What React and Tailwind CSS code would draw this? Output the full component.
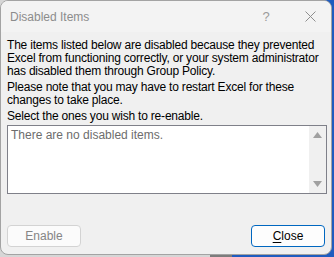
import React from 'react';

// Excel "Disabled Items" dialog, inactive window state
export default function App() {
    return (
        <div className="w-[334px] h-[257px] overflow-hidden bg-[linear-gradient(to_right,#d6d6d6_63%,#7c7c7c_63%,#7c7c7c_69.5%,#1f5cbf_69.5%)] font-['Liberation_Sans',sans-serif]">
            <div className="w-[332px] h-[255px] rounded-[8px] border border-[#a3a3a3] bg-[#f0f0f0] flex flex-col overflow-hidden">
                {/* Title bar */}
                <div className="h-[31px] shrink-0 bg-[#f3f3f3] flex items-center pl-[9px] text-[12px] text-[#8c8c8c]">
                    <span>Disabled Items</span>
                    <span className="ml-auto w-[46px] text-center text-[13px] text-[#9a9a9a]">?</span>
                    <span className="w-[42px] flex items-center justify-center">
                        <svg width="11" height="11" viewBox="0 0 11 11">
                            <path d="M0.5 0.5 L10.5 10.5 M10.5 0.5 L0.5 10.5" stroke="#8e8e8e" strokeWidth="1" fill="none" />
                        </svg>
                    </span>
                </div>

                {/* Body */}
                <div className="flex-1 flex flex-col pl-[6px] pr-[4px] pt-[7px] text-[12px] leading-[13px] text-black">
                    <div className="tracking-[-0.2px]">
                        <p>The items listed below are disabled because they prevented Excel from functioning correctly, or your system administrator has disabled them through Group Policy.</p>
                        <p className="mt-[3px]">Please note that you may have to restart Excel for these changes to take place.</p>
                        <p className="mt-[3px]">Select the ones you wish to re-enable.</p>
                    </div>

                    <div className="mt-[2px] h-[69px] border border-[#7f8089] bg-white flex">
                        <div className="flex-1 pl-[3px] pt-[3px] text-[#6d6d6d]">There are no disabled items.</div>
                        <div className="w-[17px] bg-[#f0f0f0] flex flex-col items-center justify-between py-[6px]">
                            <svg width="9" height="6" viewBox="0 0 9 6"><path d="M4.5 0 L9 6 L0 6 Z" fill="#a0a0a0" /></svg>
                            <svg width="9" height="6" viewBox="0 0 9 6"><path d="M0 0 L9 0 L4.5 6 Z" fill="#a0a0a0" /></svg>
                        </div>
                    </div>

                    {/* Buttons */}
                    <div className="mt-auto mb-[7px] flex justify-between pr-[2px]">
                        <button className="w-[74px] h-[22px] rounded-[4px] border border-[#d3d3d3] bg-[#fbfbfb] text-[12px] text-[#858585]">Enable</button>
                        <button className="w-[74px] h-[22px] rounded-[4px] border border-[#0067c0] bg-[#fdfdfd] text-[12px] text-black">
                            <span className="underline underline-offset-2">C</span>lose
                        </button>
                    </div>
                </div>
            </div>
        </div>
    );
}
